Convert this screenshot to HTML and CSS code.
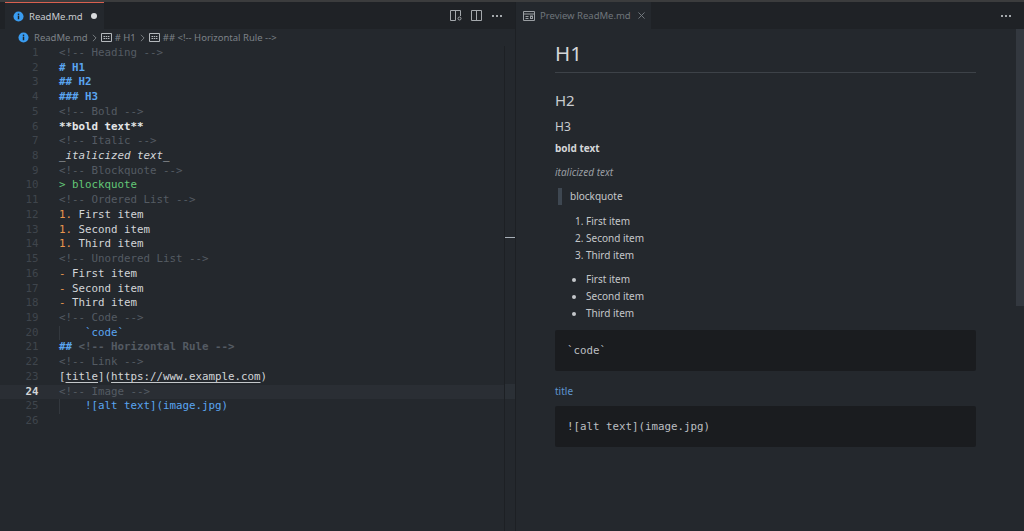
FILE: index.html
```html
<!DOCTYPE html>
<html lang="en">
<head>
    <meta charset="UTF-8">
    <title>ReadMe.md</title>
    <link rel="stylesheet" href="styles.css">
</head>
<body>
    <div class="topline"></div>
    <div class="groups">
        <section class="group group-left">
            <div class="tabbar">
                <div class="tab tab-active">
                    <svg class="info" viewBox="0 0 12 12"><circle cx="6" cy="6" r="5.5" fill="#3a9df2"/><rect x="5.2" y="5" width="1.6" height="4" fill="#1e2226"/><rect x="5.2" y="2.8" width="1.6" height="1.5" fill="#1e2226"/></svg>
                    <span>ReadMe.md</span>
                    <i class="dirty"></i>
                </div>
                <div class="actions">
                    <svg class="act" viewBox="0 0 12 11" fill="none" stroke="#a4a8ac"><path d="M5.5 10.5H.5V.5H10.5V6M5.5 .5V10.5"/><circle cx="9.5" cy="8.5" r="1.5"/></svg>
                    <svg class="act" viewBox="0 0 12 11" fill="none" stroke="#a4a8ac"><path d="M.5 .5H10.5V10.5H.5ZM5.5 .5V10.5"/></svg>
                    <span class="dots"><i></i><i></i><i></i></span>
                </div>
            </div>
            <div class="crumbs">
                <svg class="info" viewBox="0 0 12 12"><circle cx="6" cy="6" r="5.5" fill="#3a9df2"/><rect x="5.2" y="5" width="1.6" height="4" fill="#1e2226"/><rect x="5.2" y="2.8" width="1.6" height="1.5" fill="#1e2226"/></svg>
                <span>ReadMe.md</span>
                <svg class="chev" viewBox="0 0 6 10" fill="none" stroke="#8b9095"><path d="M1 1l4 4-4 4"/></svg>
                <svg class="sym" viewBox="0 0 11 9" fill="none" stroke="#b4b8bc"><path d="M.5.5h10v8H.5z"/><path d="M2.5 3.5h6M2.5 5.5h6" stroke-dasharray="1.5 .7"/></svg>
                <span># H1</span>
                <svg class="chev" viewBox="0 0 6 10" fill="none" stroke="#8b9095"><path d="M1 1l4 4-4 4"/></svg>
                <svg class="sym" viewBox="0 0 11 9" fill="none" stroke="#b4b8bc"><path d="M.5.5h10v8H.5z"/><path d="M2.5 3.5h6M2.5 5.5h6" stroke-dasharray="1.5 .7"/></svg>
                <span>## &lt;!-- Horizontal Rule --&gt;</span>
            </div>
            <div class="editor">
                <div class="line"><b class="num">1</b><code class="cm">&lt;!-- Heading --&gt;</code></div>
                <div class="line"><b class="num">2</b><code class="hd"># H1</code></div>
                <div class="line"><b class="num">3</b><code class="hd">## H2</code></div>
                <div class="line"><b class="num">4</b><code class="hd">### H3</code></div>
                <div class="line"><b class="num">5</b><code class="cm">&lt;!-- Bold --&gt;</code></div>
                <div class="line"><b class="num">6</b><code class="bold">**bold text**</code></div>
                <div class="line"><b class="num">7</b><code class="cm">&lt;!-- Italic --&gt;</code></div>
                <div class="line"><b class="num">8</b><code class="txt">_<em>italicized text</em>_</code></div>
                <div class="line"><b class="num">9</b><code class="cm">&lt;!-- Blockquote --&gt;</code></div>
                <div class="line"><b class="num">10</b><code class="quote">&gt; blockquote</code></div>
                <div class="line"><b class="num">11</b><code class="cm">&lt;!-- Ordered List --&gt;</code></div>
                <div class="line"><b class="num">12</b><code class="txt"><span class="mark">1.</span> First item</code></div>
                <div class="line"><b class="num">13</b><code class="txt"><span class="mark">1.</span> Second item</code></div>
                <div class="line"><b class="num">14</b><code class="txt"><span class="mark">1.</span> Third item</code></div>
                <div class="line"><b class="num">15</b><code class="cm">&lt;!-- Unordered List --&gt;</code></div>
                <div class="line"><b class="num">16</b><code class="txt"><span class="mark">-</span> First item</code></div>
                <div class="line"><b class="num">17</b><code class="txt"><span class="mark">-</span> Second item</code></div>
                <div class="line"><b class="num">18</b><code class="txt"><span class="mark">-</span> Third item</code></div>
                <div class="line"><b class="num">19</b><code class="cm">&lt;!-- Code --&gt;</code></div>
                <div class="line guide"><b class="num">20</b><code class="raw">    `code`</code></div>
                <div class="line"><b class="num">21</b><code class="cm strong"><span class="hd">##</span> &lt;!-- Horizontal Rule --&gt;</code></div>
                <div class="line"><b class="num">22</b><code class="cm">&lt;!-- Link --&gt;</code></div>
                <div class="line"><b class="num">23</b><code class="txt">[<u>title</u>](<u>https://www.example.com</u>)</code></div>
                <div class="line current"><b class="num">24</b><code class="cm">&lt;!-- Image --&gt;</code></div>
                <div class="line guide"><b class="num">25</b><code class="raw">    ![alt text](image.jpg)</code></div>
                <div class="line"><b class="num">26</b><code></code></div>
                <div class="ruler"><span class="ruler-line"></span><span class="ruler-mark"></span></div>
            </div>
        </section>
        <section class="group group-right">
            <div class="tabbar">
                <div class="tab tab-preview">
                    <svg class="tab-icon" viewBox="0 0 12 10" fill="none" stroke="#9a9ea2"><path d="M.5 .5H11.5V9.5H.5ZM.5 3H11.5M2.5 5.5H5.5M2.5 7.5H5.5"/><rect x="7.5" y="5" width="2" height="2.5"/></svg>
                    <span>Preview ReadMe.md</span>
                    <svg class="close" viewBox="0 0 8 8" fill="none" stroke="#7c8187"><path d="M.5.5l7 7M7.5.5l-7 7"/></svg>
                </div>
                <div class="actions">
                    <span class="dots"><i></i><i></i><i></i></span>
                </div>
            </div>
            <div class="preview">
                <h1>H1</h1>
                <h2>H2</h2>
                <h3>H3</h3>
                <p class="tight"><strong>bold text</strong></p>
                <p><em>italicized text</em></p>
                <blockquote>blockquote</blockquote>
                <ol>
                    <li>First item</li>
                    <li>Second item</li>
                    <li>Third item</li>
                </ol>
                <ul>
                    <li>First item</li>
                    <li>Second item</li>
                    <li>Third item</li>
                </ul>
                <pre>`code`</pre>
                <p class="link-row"><a href="#">title</a></p>
                <pre class="after-link">![alt text](image.jpg)</pre>
                <div class="scrollbar"></div>
            </div>
        </section>
    </div>
</body>
</html>
```

FILE: styles.css
```css
* {
    margin: 0;
    padding: 0;
    box-sizing: border-box;
}

html, body {
    height: 100%;
    overflow: hidden;
}

body {
    display: flex;
    flex-direction: column;
    background-color: #24282d;
    color: #c4c7ca;
    font-family: "Noto Sans", sans-serif;
    font-size: 9.5px;
}

.topline {
    height: 2px;
    background-color: #3b3c3d;
}

.groups {
    flex: 1;
    display: flex;
    min-height: 0;
}

.group {
    display: flex;
    flex-direction: column;
    min-width: 0;
}

.group-left {
    width: 515px;
}

.group-right {
    flex: 1;
    border-left: 1px solid #1d2024;
}

.tabbar {
    height: 27px;
    flex: none;
    display: flex;
    justify-content: space-between;
    background-color: #1f2226;
}

.group-left .tabbar {
    padding-left: 5px;
}

.tab {
    display: flex;
    align-items: center;
    white-space: nowrap;
    background-color: #24282d;
}

.tab-active {
    width: 99px;
    padding-left: 8px;
    gap: 5px;
    border-top: 1px solid #d9604f;
    color: #c9ccd0;
}

.tab-preview {
    width: 135px;
    padding-left: 7px;
    gap: 5px;
    color: #6f757b;
}

.info {
    width: 11px;
    height: 11px;
    flex: none;
}

.dirty {
    width: 6px;
    height: 6px;
    margin-left: 3px;
    border-radius: 50%;
    background-color: #d9dbdd;
}

.actions {
    display: flex;
    align-items: center;
    gap: 9px;
    padding-right: 13px;
}

.act {
    width: 12px;
    height: 11px;
    flex: none;
}

.tab-icon {
    width: 12px;
    height: 10px;
    flex: none;
}

.close {
    width: 7px;
    height: 7px;
    margin-left: 2px;
}

.dots {
    display: flex;
    gap: 2px;
    width: 10px;
}

.dots i {
    width: 2px;
    height: 2px;
    background-color: #a4a8ac;
}

.crumbs {
    height: 17px;
    flex: none;
    display: flex;
    align-items: center;
    gap: 3px;
    padding-left: 18px;
    color: #7d8288;
}

.crumbs .info {
    margin-right: 2px;
}

.chev {
    width: 5px;
    height: 8px;
    margin: 0 1px;
}

.sym {
    width: 11px;
    height: 9px;
}

.editor {
    position: relative;
    flex: 1;
    font-family: "DejaVu Sans Mono", monospace;
    font-size: 10.8px;
}

.line {
    display: flex;
    height: 14.72px;
    line-height: 14.9px;
}

.line .num {
    width: 38.5px;
    flex: none;
    text-align: right;
    font-weight: normal;
    color: #3f454c;
}

.line code {
    margin-left: 20.5px;
    font-family: inherit;
    font-size: inherit;
    white-space: pre;
}

.line.current {
    background-color: #2a2e34;
}

.line.current .num {
    color: #d4d6d8;
    font-weight: bold;
}

.line.guide code {
    background: linear-gradient(#33383e, #33383e) no-repeat 0 0 / 1px 100%;
}

.cm {
    color: #545b63;
}

.strong {
    font-weight: bold;
}

.hd {
    color: #5aa5f0;
    font-weight: bold;
}

.bold {
    color: #e4e6e8;
    font-weight: bold;
}

.txt {
    color: #d2d5d8;
}

.quote {
    color: #63c777;
}

.mark {
    color: #e8954e;
}

.raw {
    color: #5aa5f0;
}

.line u {
    text-underline-offset: 2px;
    text-decoration-color: #c4c7ca;
}

.ruler {
    position: absolute;
    top: 0;
    bottom: 0;
    left: 504px;
    width: 11px;
    border-left: 1px solid #1d2024;
}

.ruler-mark {
    position: absolute;
    top: 191px;
    left: 0;
    width: 10px;
    height: 1px;
    background-color: #a8b0b8;
}

.ruler-line {
    position: absolute;
    top: 338px;
    left: 0;
    width: 10px;
    height: 15px;
    background-color: #2b3036;
}

.preview {
    position: relative;
    flex: 1;
    padding: 0 48px 0 39px;
    font-size: 10px;
    line-height: 15px;
    overflow: hidden;
}

.preview h1 {
    padding: 11px 0 5px;
    border-bottom: 1px solid #3d4248;
    color: #d4d6d8;
    font-size: 20.5px;
    font-weight: normal;
    line-height: 27px;
}

.preview h2 {
    margin-top: 17px;
    color: #c9ccd0;
    font-size: 15px;
    font-weight: normal;
    line-height: 20px;
}

.preview h3 {
    margin-top: 9px;
    color: #c9ccd0;
    font-size: 12px;
    font-weight: normal;
    line-height: 16px;
}

.preview p {
    margin-top: 9px;
}

.preview p.tight {
    margin-top: 6px;
}

.preview p.link-row {
    margin-top: 13px;
}

.preview strong {
    color: #d4d6d8;
}

.preview em {
    color: #9a9ea2;
}

.preview blockquote {
    margin: 8px 0 0 3px;
    padding-left: 8px;
    border-left: 4px solid #3e4751;
    line-height: 17px;
}

.preview ol, .preview ul {
    margin-top: 8px;
    padding-left: 31px;
}

.preview ul {
    margin-top: 7px;
}

.preview li {
    line-height: 17px;
}

.preview pre {
    height: 41px;
    margin-top: 8px;
    padding: 0 12px;
    border-radius: 2px;
    background-color: #1a1c1f;
    color: #bcbfc2;
    font-family: "DejaVu Sans Mono", monospace;
    font-size: 10.8px;
    line-height: 41px;
}

.preview pre.after-link {
    margin-top: 7px;
}

.preview a {
    color: #5f95cf;
    text-decoration: none;
}

.scrollbar {
    position: absolute;
    top: 0;
    right: 0;
    width: 8px;
    height: 277px;
    background-color: #33383f;
}
```
